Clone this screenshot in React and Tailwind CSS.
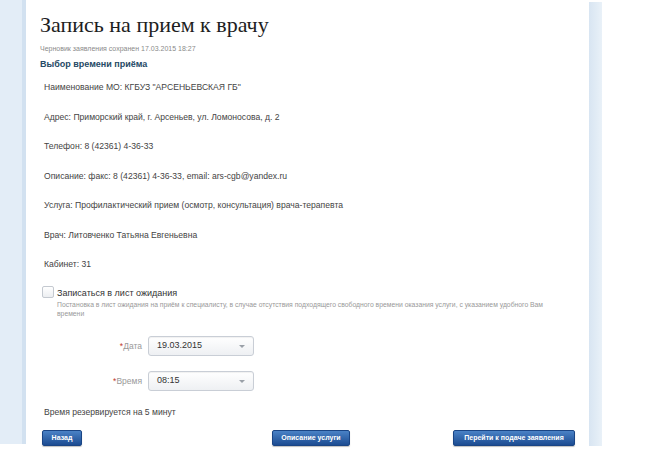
import React from 'react';

const rows = [
  'Наименование МО: КГБУЗ "АРСЕНЬЕВСКАЯ ГБ"',
  'Адрес: Приморский край, г. Арсеньев, ул. Ломоносова, д. 2',
  'Телефон: 8 (42361) 4-36-33',
  'Описание: факс: 8 (42361) 4-36-33, email: ars-cgb@yandex.ru',
  'Услуга: Профилактический прием (осмотр, консультация) врача-терапевта',
  'Врач: Литовченко Татьяна Евгеньевна',
  'Кабинет: 31',
];

function Select({ value }) {
  return (
    <div className="w-[106px] h-[20px] rounded-[3px] border border-[#c9ced6] bg-linear-to-b from-white to-[#eef0f3] shadow-[inset_0_1px_1px_rgba(0,0,0,0.06)] flex items-center justify-between pl-[8px] pr-[8px]">
      <span className="text-[9px] text-[#333]">{value}</span>
      <span className="w-0 h-0 border-l-[3px] border-r-[3px] border-t-[3px] border-l-transparent border-r-transparent border-t-[#9aa0a8]" />
    </div>
  );
}

function Btn({ children, className = '' }) {
  return (
    <button className={`h-[16px] rounded-[2px] bg-linear-to-b from-[#4a82c6] to-[#1c4c92] border border-[#1a4585] text-white text-[7px] font-bold px-[6px] shadow-[0_1px_1px_rgba(0,0,0,0.25)] ${className}`}>
      {children}
    </button>
  );
}

export default function App() {
  return (
    <div className="w-[671px] h-[456px] bg-white overflow-hidden flex font-['Liberation_Sans',Arial,sans-serif]">
      {/* left frame */}
      <div className="shrink-0 w-[27px] h-[444px] flex">
        <div className="w-[22px] h-full bg-[#e3edf7]" />
        <div className="w-[4px] h-full bg-[#d2e1f0]" />
      </div>

      <div className="shrink-0 w-[562px] h-[446px] pl-[13px] flex flex-col">
        <h1 className="mt-[12px] text-[22px] leading-[26px] text-[#1e1e1e] font-['Liberation_Serif','Times_New_Roman',serif]">
          Запись на прием к врачу
        </h1>
        <div className="mt-[6px] text-[7px] leading-[10px] text-[#8a8a8a]">
          Черновик заявления сохранен 17.03.2015 18:27
        </div>
        <div className="mt-[4px] text-[9px] leading-[12px] font-bold text-[#264a66]">Выбор времени приёма</div>

        <div className="mt-[11px] pl-[4px] flex flex-col gap-[17.5px]">
          {rows.map((r) => (
            <div key={r} className="text-[8.6px] leading-[12px] text-[#444]">{r}</div>
          ))}
        </div>

        <div className="mt-[16px] flex items-start gap-[3px] pl-[2px]">
          <div className="shrink-0 w-[12px] h-[12px] rounded-[2px] border border-[#c4c9d0] bg-linear-to-b from-white to-[#eceef1]" />
          <div className="flex flex-col">
            <div className="text-[9px] leading-[12px] text-[#333] mt-[1px]">Записаться в лист ожидания</div>
            <div className="mt-[1px] w-[492px] text-[6.8px] leading-[9px] text-[#999]">
              Постановка в лист ожидания на приём к специалисту, в случае отсутствия подходящего свободного времени оказания услуги, с указанием удобного Вам времени
            </div>
          </div>
        </div>

        <div className="mt-[18px] flex items-center">
          <div className="w-[108px] text-right text-[8.5px] text-[#999] pr-[6px]">
            <span className="text-[#c0392b]">*</span>Дата
          </div>
          <Select value="19.03.2015" />
        </div>
        <div className="mt-[15px] flex items-center">
          <div className="w-[108px] text-right text-[8.5px] text-[#999] pr-[6px]">
            <span className="text-[#c0392b]">*</span>Время
          </div>
          <Select value="08:15" />
        </div>

        <div className="mt-[15px] pl-[4px] text-[8.6px] leading-[12px] text-[#444]">Время резервируется на 5 минут</div>

        <div className="mt-[12px] flex items-center pl-[2px] pr-[14px]">
          <Btn className="w-[40px]">Назад</Btn>
          <Btn className="w-[78px] ml-[190px]">Описание услуги</Btn>
          <Btn className="w-[122px] ml-auto">Перейти к подаче заявления</Btn>
        </div>
      </div>

      {/* right frame */}
      <div className="shrink-0 w-[13px] h-[444px] mt-[2px] bg-linear-to-r from-[#d8e5f2] to-[#e9f1f8]" />
    </div>
  );
}
